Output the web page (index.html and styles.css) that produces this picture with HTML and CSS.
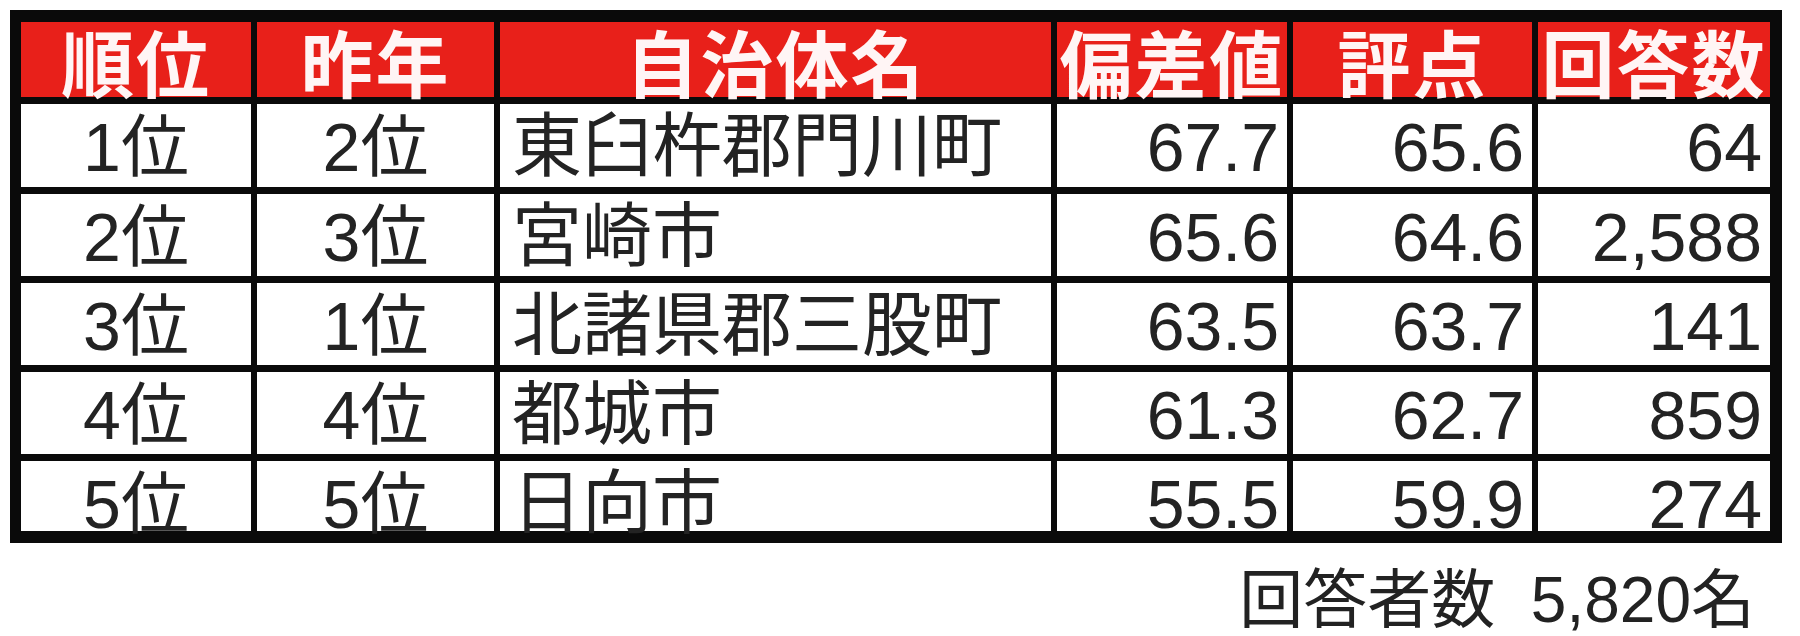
FILE: index.html
```html
<!DOCTYPE html>
<html lang="ja">
<head>
<meta charset="utf-8">
<link rel="stylesheet" href="styles.css">
</head>
<body>
<div class="page">
  <div class="ranking">
    <div class="cell head">順位</div>
    <div class="cell head">昨年</div>
    <div class="cell head">自治体名</div>
    <div class="cell head">偏差値</div>
    <div class="cell head">評点</div>
    <div class="cell head">回答数</div>

    <div class="cell c">1位</div>
    <div class="cell c">2位</div>
    <div class="cell l">東臼杵郡門川町</div>
    <div class="cell r">67.7</div>
    <div class="cell r">65.6</div>
    <div class="cell r">64</div>

    <div class="cell c">2位</div>
    <div class="cell c">3位</div>
    <div class="cell l">宮崎市</div>
    <div class="cell r">65.6</div>
    <div class="cell r">64.6</div>
    <div class="cell r">2,588</div>

    <div class="cell c">3位</div>
    <div class="cell c">1位</div>
    <div class="cell l">北諸県郡三股町</div>
    <div class="cell r">63.5</div>
    <div class="cell r">63.7</div>
    <div class="cell r">141</div>

    <div class="cell c">4位</div>
    <div class="cell c">4位</div>
    <div class="cell l">都城市</div>
    <div class="cell r">61.3</div>
    <div class="cell r">62.7</div>
    <div class="cell r">859</div>

    <div class="cell c">5位</div>
    <div class="cell c">5位</div>
    <div class="cell l">日向市</div>
    <div class="cell r">55.5</div>
    <div class="cell r">59.9</div>
    <div class="cell r">274</div>
  </div>
  <div class="total">回答者数&nbsp;&nbsp;5,820名</div>
</div>
</body>
</html>
```

FILE: styles.css
```css
html, body {
  margin: 0;
  padding: 0;
  background: #ffffff;
}

.page {
  width: 1800px;
  height: 636px;
  padding: 10px 0 0 10px;
  box-sizing: border-box;
  font-family: "Liberation Sans", "Noto Sans CJK JP", sans-serif;
  color: #232323;
}

.ranking {
  width: 1772px;
  box-sizing: border-box;
  display: grid;
  grid-template-columns: 230px 237px 551px 230px 239px 232px;
  grid-template-rows: 75px 83px 82px 82px 82px 70px;
  column-gap: 6px;
  row-gap: 7px;
  background: #0a0a0a;
  border: 12px solid #0a0a0a;
  border-left-width: 11px;
}

.cell {
  background: #ffffff;
  font-size: 68px;
  line-height: 70px;
  padding-top: 8px;
  white-space: nowrap;
  box-sizing: border-box;
  min-width: 0;
}

.head {
  background: #e8201a;
  color: #fff5f5;
  font-family: "Noto Sans CJK JP", sans-serif;
  font-weight: 700;
  font-size: 73px;
  line-height: 72px;
  padding-top: 2px;
  text-align: center;
  letter-spacing: 2px;
}

.c { text-align: center; }
.l { text-align: left; padding-left: 12px; font-size: 70px; }
.r { text-align: right; padding-right: 8px; }

.total {
  width: 1745px;
  text-align: right;
  font-size: 64px;
  line-height: 70px;
  margin-top: 22px;
  color: #222222;
}
```
